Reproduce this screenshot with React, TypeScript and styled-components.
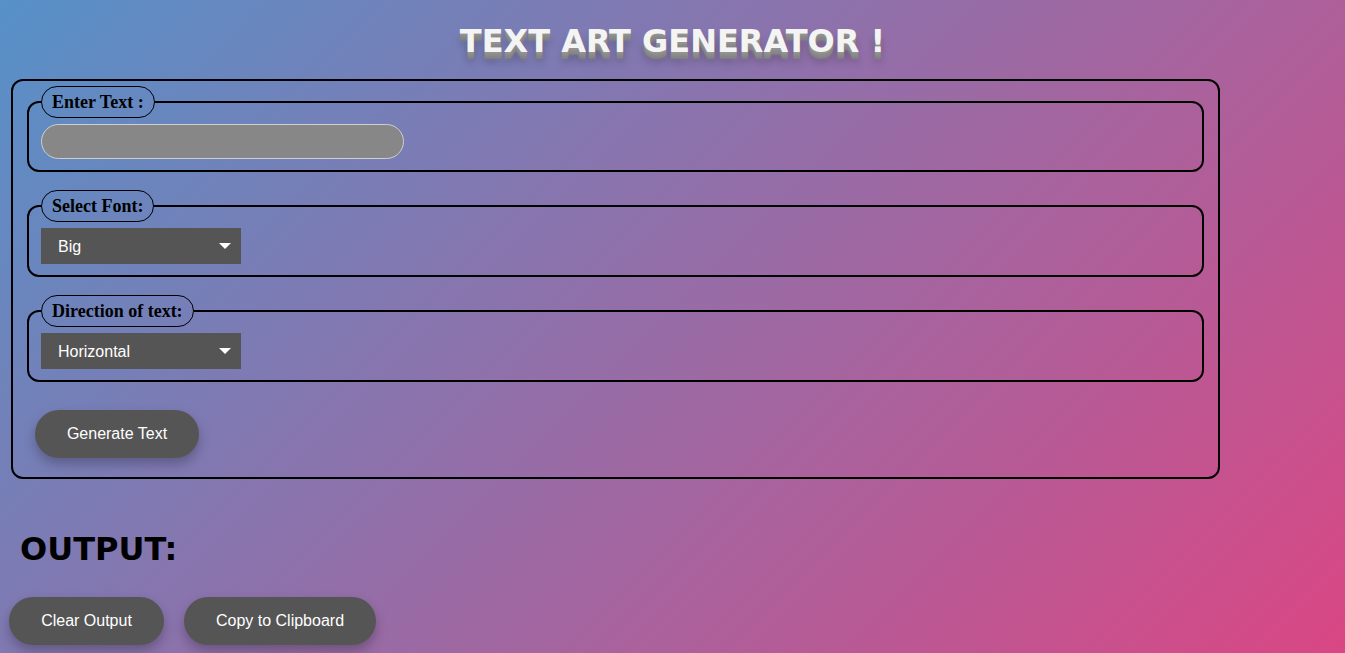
import React, { useState } from "react";
import styled, { createGlobalStyle } from "styled-components";

const GlobalStyle = createGlobalStyle`
  html, body { margin: 0; padding: 0; }
  body {
    min-height: 653px;
    background: linear-gradient(135deg, #5691c8 0%, #d94784 100%);
    background-attachment: fixed;
    font-family: "Liberation Sans", Arial, sans-serif;
  }
`;

const Page = styled.div`
  padding: 20px 0 0 11px;
  height: 653px;
  box-sizing: border-box;
  overflow: hidden;
`;

const Title = styled.h1`
  margin: 0 0 17px 0;
  padding-right: 11px;
  text-align: center;
  font-family: Verdana, "DejaVu Sans", sans-serif;
  font-size: 32px;
  line-height: 42px;
  font-weight: bold;
  color: #f4f4f4;
  text-shadow: 0 2px 0 #929292, 0 4px 0 #8a8a8a, 0 6px 0 #858585,
    0 7px 2px #808080, 0 10px 8px rgba(0, 0, 0, 0.25);
`;

const Panel = styled.form`
  width: 1209px;
  box-sizing: border-box;
  border: 2px solid #000;
  border-radius: 12px;
  padding: 5px 14px 19px 14px;
  display: flex;
  flex-direction: column;
  gap: 18px;
`;

const Group = styled.fieldset`
  margin: 0;
  border: 2px solid #000;
  border-radius: 12px;
  padding: 6px 12px 11px 12px;
  min-width: 0;
`;

const Legend = styled.legend`
  font-family: "Liberation Serif", "Times New Roman", serif;
  font-weight: bold;
  font-size: 18px;
  line-height: 20px;
  color: #000;
  border: 1px solid #000;
  border-radius: 16px;
  padding: 5px 10px;
  margin-left: 0;
`;

const TextInput = styled.input`
  display: block;
  width: 363px;
  height: 35px;
  box-sizing: border-box;
  background: #878787;
  border: 1px solid #cfcfcf;
  border-radius: 18px;
  padding: 0 14px;
  font-family: "Liberation Sans", Arial, sans-serif;
  font-size: 16px;
  color: #fff;
  outline: none;
`;

const SelectWrap = styled.div`
  position: relative;
  width: 200px;
  height: 36px;
  &::after {
    content: "";
    position: absolute;
    right: 10px;
    top: 15px;
    border-left: 6px solid transparent;
    border-right: 6px solid transparent;
    border-top: 6px solid #fff;
    pointer-events: none;
  }
`;

const Select = styled.select`
  appearance: none;
  -webkit-appearance: none;
  width: 100%;
  height: 100%;
  background: #555555;
  color: #fff;
  border: none;
  border-radius: 0;
  padding: 0 17px;
  font-family: "Liberation Sans", Arial, sans-serif;
  font-size: 16px;
  outline: none;
`;

const PillButton = styled.button<{ $width: number }>`
  width: ${(p) => p.$width}px;
  height: 48px;
  border: none;
  border-radius: 24px;
  background: #555555;
  color: #fff;
  font-family: "Liberation Sans", Arial, sans-serif;
  font-size: 16px;
  cursor: pointer;
  box-shadow: 0 6px 12px rgba(0, 0, 0, 0.25);
`;

const GenerateRow = styled.div`
  padding: 10px 0 0 8px;
`;

const OutputHeading = styled.h2`
  margin: 50px 0 0 9px;
  font-family: Verdana, "DejaVu Sans", sans-serif;
  font-size: 32px;
  line-height: 40px;
  font-weight: bold;
  color: #000;
`;

const ButtonRow = styled.div`
  display: flex;
  gap: 20px;
  margin: 28px 0 0 -2px;
`;

export default function App() {
  const [text, setText] = useState("");
  const [font, setFont] = useState("Big");
  const [dir, setDir] = useState("Horizontal");
  return (
    <>
      <GlobalStyle />
      <Page>
        <Title>TEXT ART GENERATOR !</Title>
        <Panel onSubmit={(e) => e.preventDefault()}>
          <Group>
            <Legend>Enter Text :</Legend>
            <TextInput value={text} onChange={(e) => setText(e.target.value)} />
          </Group>
          <Group>
            <Legend>Select Font:</Legend>
            <SelectWrap>
              <Select value={font} onChange={(e) => setFont(e.target.value)}>
                <option>Big</option>
                <option>Standard</option>
                <option>Slant</option>
              </Select>
            </SelectWrap>
          </Group>
          <Group>
            <Legend>Direction of text:</Legend>
            <SelectWrap>
              <Select value={dir} onChange={(e) => setDir(e.target.value)}>
                <option>Horizontal</option>
                <option>Vertical</option>
              </Select>
            </SelectWrap>
          </Group>
          <GenerateRow>
            <PillButton $width={164} type="button">Generate Text</PillButton>
          </GenerateRow>
        </Panel>
        <OutputHeading>OUTPUT:</OutputHeading>
        <ButtonRow>
          <PillButton $width={155} type="button">Clear Output</PillButton>
          <PillButton $width={192} type="button">Copy to Clipboard</PillButton>
        </ButtonRow>
      </Page>
    </>
  );
}
